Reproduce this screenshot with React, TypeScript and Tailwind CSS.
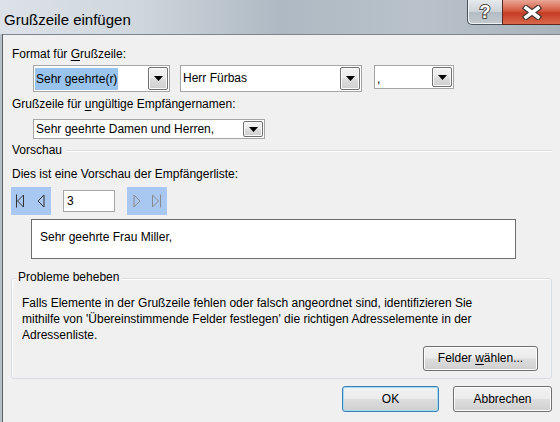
import React from 'react';

const DropButton: React.FC = () => (
  <div className="m-px w-[20px] shrink-0 flex items-center justify-center border border-[#707070] rounded-[2px] bg-[linear-gradient(#f3f3f3,#ebebeb_45%,#dcdcdc_55%,#cfcfcf)] shadow-[inset_0_0_0_1px_#fbfbfb]">
    <svg width="9" height="5" viewBox="0 0 9 5">
      <path d="M0 0h9L4.5 5z" fill="#000" />
    </svg>
  </div>
);

const Combo: React.FC<{ className: string; children?: React.ReactNode }> = ({ className, children }) => (
  <div className={`flex border border-[#a6a6a6] bg-white ${className}`}>
    <div className="flex-1 flex items-center pl-[1px] min-w-0 whitespace-nowrap">{children}</div>
    <DropButton />
  </div>
);

const WinButton: React.FC<{ className: string; focused?: boolean; children: React.ReactNode }> = ({ className, focused, children }) => (
  <div
    className={`flex items-center justify-center rounded-[3px] border bg-[linear-gradient(#f2f2f2,#ebebeb_48%,#dddddd_52%,#cfcfcf)] ${
      focused ? 'border-[#3c7fb1] shadow-[inset_0_0_0_1px_#9fdcf7]' : 'border-[#707070] shadow-[inset_0_0_0_1px_#fcfcfc]'
    } ${className}`}
  >
    <span>{children}</span>
  </div>
);

const FirstIcon: React.FC<{ color: string }> = ({ color }) => (
  <svg width="9" height="14" viewBox="0 0 9 14">
    <path d="M1.5 0.5v13M8.5 1L2.5 7l6 6z" fill="none" stroke={color} strokeWidth="1" />
  </svg>
);

const PrevIcon: React.FC<{ color: string }> = ({ color }) => (
  <svg width="8" height="14" viewBox="0 0 8 14">
    <path d="M7 1L1 7l6 6z" fill="none" stroke={color} strokeWidth="1" />
  </svg>
);

const NextIcon: React.FC<{ color: string }> = ({ color }) => (
  <svg width="8" height="14" viewBox="0 0 8 14">
    <path d="M1 1l6 6-6 6z" fill="none" stroke={color} strokeWidth="1" />
  </svg>
);

const LastIcon: React.FC<{ color: string }> = ({ color }) => (
  <svg width="10" height="14" viewBox="0 0 10 14">
    <path d="M0.5 1l6 6-6 6zM8.5 0.5v13" fill="none" stroke={color} strokeWidth="1" />
  </svg>
);

export default function App() {
  return (
    <div className="w-[560px] h-[422px] overflow-hidden flex flex-col font-['Liberation_Sans',Arial,sans-serif] text-[12px] leading-[15px] text-black bg-[#bcc5cd]">
      {/* Title bar */}
      <div className="h-[34px] shrink-0 flex justify-between bg-[linear-gradient(90deg,#dce2e7_0%,#cfd6dc_25%,#aeb9c3_50%,#b9c2ca_75%,#a9b3bc_100%)]">
        <div className="pl-[4px] pt-[11px] text-[15px] leading-[18px] text-black">Grußzeile einfügen</div>
        <div className="flex items-start">
          <div className="w-[35px] h-[25px] rounded-bl-[5px] border-l border-b border-[#4a545d] bg-[linear-gradient(#e7eaed,#ccd2d7_50%,#b4bcc3_51%,#c3cad0)] flex items-center justify-center shadow-[inset_1px_-1px_0_#f0f3f5]">
            <span className="font-bold text-[18px] leading-[18px] text-white [-webkit-text-stroke:2px_#4a4a4a] [paint-order:stroke_fill]">?</span>
          </div>
          <div className="w-[58px] h-[25px] border-b border-l border-[#5a2a22] bg-[linear-gradient(#e9a797,#d45a41_45%,#c63d26_55%,#d8694c)] flex items-center justify-center">
            <svg width="20" height="15" viewBox="0 0 20 15">
              <path d="M4 3l12 9M16 3L4 12" stroke="#4a3a36" strokeWidth="6" strokeLinecap="square" />
              <path d="M4 3l12 9M16 3L4 12" stroke="#ffffff" strokeWidth="3.5" strokeLinecap="square" />
            </svg>
          </div>
        </div>
      </div>

      {/* Frame + client */}
      <div className="flex-1 flex">
        <div className="w-[2px] bg-[#b7c0c8] border-r border-[#5c6166] box-content" />
        <div className="flex-1 flex flex-col bg-[#f0f0f0] border-t border-[#7d868e] pl-[8px] pr-[8px]">
          <div className="mt-[12px] pl-[1px]">
            Format für <span className="underline underline-offset-2">G</span>rußzeile:
          </div>

          <div className="mt-[3px] ml-[22px] flex items-start">
            <Combo className="w-[137px] h-[27px]">
              <span className="bg-[#99c4ee] px-[1px] h-[22px] leading-[22px]">Sehr geehrte(r)</span>
            </Combo>
            <Combo className="w-[182px] h-[27px] ml-[10px]">
              <span className="pl-[1px]">Herr Fürbas</span>
            </Combo>
            <Combo className="w-[80px] h-[24px] ml-[12px]">
              <span className="pl-[1px] pt-[4px]">,</span>
            </Combo>
          </div>

          <div className="mt-[5px] pl-[1px]">
            Grußzeile für <span className="underline underline-offset-2">u</span>ngültige Empfängernamen:
          </div>

          <Combo className="mt-[7px] ml-[22px] w-[232px] h-[20px]">
            <span className="pl-[1px]">Sehr geehrte Damen und Herren,</span>
          </Combo>

          <div className="mt-[4px] flex items-center">
            <span className="pl-[1px]">Vorschau</span>
            <div className="ml-[4px] flex-1 h-[2px] border-t border-[#d5dfe5] border-b border-b-white" />
          </div>

          <div className="mt-[9px] pl-[1px]">Dies ist eine Vorschau der Empfängerliste:</div>

          <div className="mt-[5px] flex items-center">
            <div className="w-[40px] h-[28px] bg-[#a9c8f1] flex items-center pl-[4px] gap-[13px]">
              <FirstIcon color="#333333" />
              <PrevIcon color="#333333" />
            </div>
            <div className="ml-[12px] w-[52px] h-[22px] border border-[#a6a6a6] bg-white flex items-center pl-[3px]">3</div>
            <div className="ml-[12px] w-[40px] h-[28px] bg-[#a9c8f1] flex items-center pl-[6px] gap-[11px]">
              <NextIcon color="#8a8a8a" />
              <LastIcon color="#8a8a8a" />
            </div>
          </div>

          <div className="mt-[4px] ml-[20px] w-[485px] h-[40px] border border-[#6d6d6d] bg-white pl-[8px] pt-[10px]">
            Sehr geehrte Frau Miller,
          </div>

          <div className="relative mt-[19px] h-[101px] rounded-[3px] border border-[#d5dfe5] shadow-[inset_1px_1px_0_#ffffff] flex flex-col">
            <span className="absolute left-[4px] top-[-9px] px-[2px] bg-[#f0f0f0]">Probleme beheben</span>
            <div className="pt-[16px] pl-[10px] leading-[16px] whitespace-nowrap">
              Falls Elemente in der Grußzeile fehlen oder falsch angeordnet sind, identifizieren Sie
              <br />
              mithilfe von 'Übereinstimmende Felder festlegen' die richtigen Adresselemente in der
              <br />
              Adressenliste.
            </div>
            <div className="mt-[3px] flex justify-end pr-[13px]">
              <WinButton className="w-[115px] h-[25px]">
                Felder <span className="underline underline-offset-2">w</span>ählen...
              </WinButton>
            </div>
          </div>

          <div className="mt-[7px] flex justify-end">
            <WinButton focused className="w-[97px] h-[26px]">OK</WinButton>
            <WinButton className="ml-[14px] w-[99px] h-[26px]">Abbrechen</WinButton>
          </div>
        </div>
      </div>
    </div>
  );
}
